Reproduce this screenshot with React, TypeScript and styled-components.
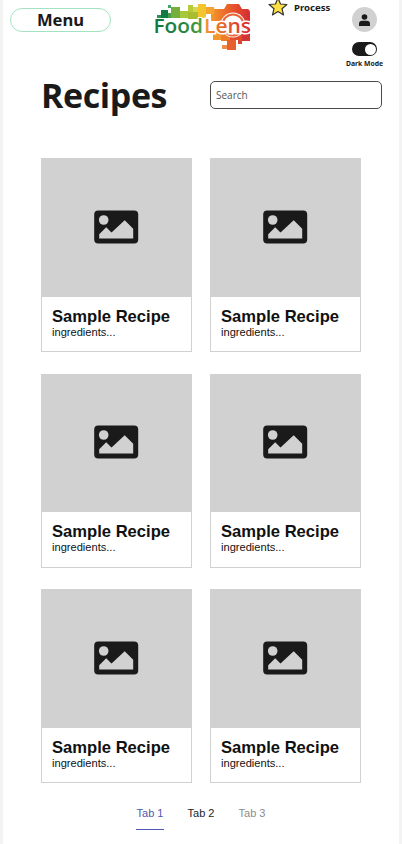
import React from 'react';
import styled, { createGlobalStyle } from 'styled-components';

const GlobalStyle = createGlobalStyle`
  *, *::before, *::after { box-sizing: border-box; }
  body { margin: 0; background: #f3f3f3; overflow: hidden; }
`;

const Page = styled.main`
  width: 396px;
  height: 844px;
  margin: 0 3px;
  overflow: hidden;
  background: #fff;
  color: #1a1a1a;
  font-family: 'Open Sans', sans-serif;
`;

const Header = styled.header`
  display: flex;
  align-items: flex-start;
  height: 81px;
  padding-left: 7px;
`;

const MenuButton = styled.button`
  width: 101px;
  height: 24px;
  margin-top: 8px;
  padding: 0;
  border: 1px solid #a3e2c1;
  border-radius: 12px;
  background: #fff;
  color: #1a1a1a;
  font: 700 16.6px/22px 'Noto Sans', 'Open Sans', sans-serif;
`;

const Logo = styled.svg`
  display: block;
  width: 104px;
  height: 54px;
  margin-left: 40px;
`;

const Process = styled.div`
  display: flex;
  align-items: center;
  height: 16px;
  margin-left: 13px;
  gap: 6px;
  font-family: 'Noto Sans', 'Open Sans', sans-serif;
  font-size: 9.6px;
  font-weight: 700;
  line-height: 16px;
  svg { display: block; margin-top: -3px; }
`;

const Account = styled.div`
  display: flex;
  flex-direction: column;
  align-items: center;
  width: 51px;
  margin: 7px 9px 0 auto;
`;

const Avatar = styled.div`
  display: grid;
  place-items: center;
  width: 25px;
  height: 25px;
  border-radius: 50%;
  background: #d1d1d1;
`;

const Toggle = styled.div`
  display: flex;
  justify-content: flex-end;
  width: 25px;
  height: 14px;
  margin-top: 10px;
  padding: 1.5px;
  border-radius: 7px;
  background: #1a1a1a;
`;

const Knob = styled.span`
  width: 11px;
  height: 11px;
  border-radius: 50%;
  background: #fff;
`;

const ToggleLabel = styled.span`
  margin-top: 3px;
  font-family: 'Noto Sans', 'Open Sans', sans-serif;
  font-size: 6.8px;
  font-weight: 700;
  line-height: 10px;
  white-space: nowrap;
`;

const TitleRow = styled.section`
  display: flex;
  align-items: flex-start;
  height: 77px;
  padding-left: 38px;
`;

const Title = styled.h1`
  width: 169px;
  margin: -9px 0 0;
  font-size: 34px;
  font-weight: 700;
  line-height: 46px;
  letter-spacing: -0.4px;
`;

const Search = styled.input`
  width: 172px;
  height: 28px;
  margin: 0;
  padding: 0 5px;
  border: 1px solid #4a4a4a;
  border-radius: 5px;
  background: #fff;
  font: 10px 'Open Sans', sans-serif;
  &::placeholder { color: #555; opacity: 1; }
`;

const Cards = styled.section`
  display: grid;
  grid-template-columns: 151px 151px;
  grid-auto-rows: 194px;
  gap: 21.5px 18px;
  height: 625px;
  padding-left: 38px;
`;

const Card = styled.article`
  border: 1px solid #d1d1d1;
  background: #fff;
  color: #111;
  font-family: 'Liberation Sans', sans-serif;
`;

const Photo = styled.div`
  display: grid;
  place-items: center;
  height: 137.5px;
  padding: 0 1px 2px 0;
  background: #d1d1d1;
`;

const CardTitle = styled.h2`
  margin: 10px 0 0 10px;
  font-size: 16.6px;
  font-weight: 700;
  line-height: 19px;
  white-space: nowrap;
`;

const Ingredients = styled.p`
  margin: 0 0 0 10px;
  font-size: 11.1px;
  line-height: 13px;
`;

const Tabs = styled.nav`
  display: flex;
  gap: 23px;
  margin: 21px 0 0 133px;
  font-family: 'Liberation Sans', sans-serif;
`;

const Tab = styled.span<{ $tone: string; $active?: boolean }>`
  width: 28px;
  height: 26px;
  border-bottom: 1px solid ${p => (p.$active ? p.$tone : 'transparent')};
  color: ${p => p.$tone};
  font-size: 11px;
  line-height: 18px;
  text-align: center;
  white-space: nowrap;
`;

const blocks: [number, number, number, number, string][] = [
  [6, 15, 4, 3, '#2b9256'], [10, 10, 7, 8, '#137b43'], [17, 5, 3, 3, '#45a563'],
  [17, 13, 4, 5, '#439f48'], [20, 7, 9, 11, '#76ae3c'], [29, 11, 8, 7, '#a5c83c'],
  [37, 5, 5, 7, '#b6cb37'], [37, 12, 10, 7, '#a9bd30'], [42, 7, 5, 5, '#d4d64b'],
  [47, 4, 8, 14, '#f3c52c'], [55, 7, 8, 7, '#f4a52d'],
  [62, 32, 8, 8, '#f2962e'], [70, 32, 9, 9, '#ef7c2b'], [79, 33, 12, 7, '#e24d2c'],
  [91, 33, 8, 8, '#d23634'], [71, 45, 5, 4, '#ef8d48'],
  [76, 40, 9, 10, '#e5602c'], [87, 40, 4, 4, '#d94730'],
];

function FoodLensLogo() {
  return (
    <Logo viewBox="0 0 104 54" role="img" aria-label="FoodLens">
      <defs>
        <linearGradient id="leaf" x1="0" x2="1">
          <stop stopColor="#11763e" /><stop offset=".6" stopColor="#248540" /><stop offset="1" stopColor="#55a13b" />
        </linearGradient>
        <linearGradient id="warm" x1="0" x2="1">
          <stop stopColor="#f39a2c" /><stop offset=".5" stopColor="#e85a2b" /><stop offset="1" stopColor="#d52c32" />
        </linearGradient>
      </defs>
      {blocks.map(([x, y, width, height, fill], i) => <rect key={i} {...{ x, y, width, height, fill }} />)}
      <path d="M60 18v-4h3V9h10l3-5h12l3 5h5q3 0 3 4v8H60z" fill="url(#warm)" />
      <circle cx="82" cy="25" r="12.5" fill="#fff" />
      <circle cx="82" cy="25" r="10.5" fill="none" stroke="#e9653b" strokeWidth="2" />
      <text x="2.5" y="33" textLength="49.5" lengthAdjust="spacingAndGlyphs" fill="url(#leaf)" stroke="#fff" strokeWidth="2" paintOrder="stroke" fontFamily="Open Sans" fontWeight="600" fontSize="19.5">Food</text>
      <text x="53" y="33" textLength="47" lengthAdjust="spacingAndGlyphs" fill="url(#warm)" stroke="#fff" strokeWidth="3" paintOrder="stroke" fontFamily="Open Sans" fontWeight="600" fontSize="19.5">Lens</text>
    </Logo>
  );
}

const PictureIcon = () => (
  <svg width="45" height="34" viewBox="0 0 45 34">
    <rect x=".2" y=".5" width="44" height="33" rx="4" fill="#1a1a1a" />
    <circle cx="9.7" cy="10" r="4.8" fill="#d1d1d1" />
    <path d="M5.200 28.500v-4.300l7-7 5.300 5.200L30.700 10.200l8.500 8.500v9.800z" fill="#d1d1d1" />
  </svg>
);

export default function App() {
  return (
    <>
      <GlobalStyle />
      <Page>
        <Header>
          <MenuButton>Menu</MenuButton>
          <FoodLensLogo />
          <Process>
            <svg width="20" height="19" viewBox="0 0 20 19">
              <path d="M10 1l2.500 6 6.400.5-4.900 4.200 1.500 6.200-5.500-3.300-5.500 3.300L6 11.700 1.100 7.500 7.500 7z" fill="#ffe044" stroke="#333" strokeWidth="1.2" strokeLinejoin="round" />
            </svg>
            <span>Process</span>
          </Process>
          <Account>
            <Avatar>
              <svg width="11" height="12" viewBox="0 0 11 12" fill="#1a1a1a">
                <circle cx="5.5" cy="3" r="2.8" />
                <path d="M0 12V10q0-3.300 3.300-3.300h4.400Q11 6.700 11 10v2z" />
              </svg>
            </Avatar>
            <Toggle><Knob /></Toggle>
            <ToggleLabel>Dark Mode</ToggleLabel>
          </Account>
        </Header>
        <TitleRow>
          <Title>Recipes</Title>
          <Search placeholder="Search" aria-label="Search" />
        </TitleRow>
        <Cards>
          {Array.from({ length: 6 }, (_, i) => (
            <Card key={i}>
              <Photo><PictureIcon /></Photo>
              <CardTitle>Sample Recipe</CardTitle>
              <Ingredients>ingredients...</Ingredients>
            </Card>
          ))}
        </Cards>
        <Tabs>
          <Tab $tone="#4f58b0" $active>Tab 1</Tab>
          <Tab $tone="#242424">Tab 2</Tab>
          <Tab $tone="#8b8b8b">Tab 3</Tab>
        </Tabs>
      </Page>
    </>
  );
}
